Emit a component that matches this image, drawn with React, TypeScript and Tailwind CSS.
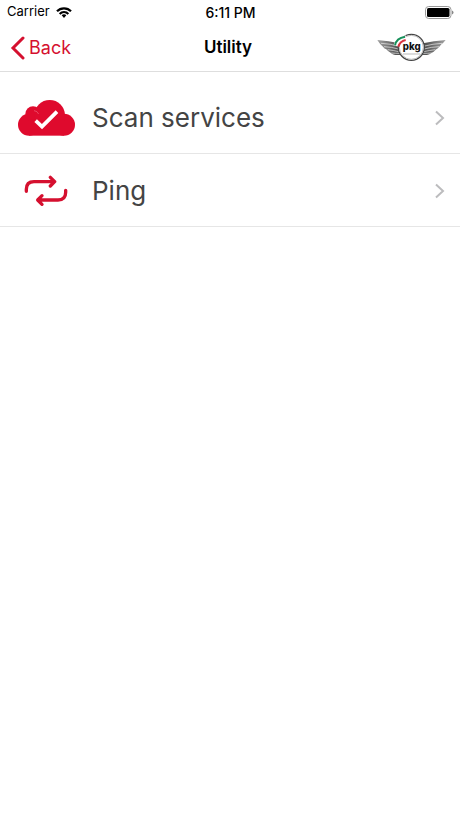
import React from "react";

function WifiIcon() {
  return (
    <svg viewBox="0 0 48 33" className="h-[11px] w-4" aria-hidden="true">
      <g fill="none" stroke="#000" strokeWidth="6.5">
        <path d="M3 13 C14 1 34 1 45 13" />
        <path d="M11 21 C18 13 30 13 37 21" />
      </g>
      <path d="M17 25 C21 21 27 21 31 25 L24 33 Z" />
    </svg>
  );
}

function BatteryIcon() {
  return (
    <svg viewBox="0 0 29 13" className="h-[13px] w-[29px]" aria-hidden="true">
      <rect x="0.5" y="0.5" width="25.5" height="12" rx="3.2" fill="#fff" stroke="#999" />
      <rect x="2" y="2" width="22.5" height="9" rx="1.6" />
      <path d="M27 4.5 Q28.5 5 28.5 6.5 T27 8.5 Z" fill="#888" />
    </svg>
  );
}

function Logo() {
  return (
    <svg viewBox="0 0 207 87" className="h-[29px] w-[69px]" role="img" aria-label="pkg">
      <defs>
        <linearGradient id="wing" x1="0" x2="1" y1="0" y2="0">
          <stop offset="0" stopColor="#a2a2a2" />
          <stop offset="0.28" stopColor="#555" />
          <stop offset="0.72" stopColor="#555" />
          <stop offset="1" stopColor="#a2a2a2" />
        </linearGradient>
      </defs>
      <path
        d="M1 21 Q35 23 68 31 L138 31 Q170 23 206 21 Q199 30 194 33 L187 41 Q181 48 178 49 Q170 58 164 59 Q156 68 136 66 L68 66 Q48 68 41 59 Q34 57 28 49 Q22 48 18 41 Q12 38 1 21 Z"
        fill="url(#wing)"
      />
      <g fill="none" stroke="#f0f0f0" strokeWidth="2">
        <path d="M12 31 Q40 32 66 40 M21 41 Q45 42 64 48 M32 50 Q49 52 65 56 M43 60 Q55 61 68 61" />
        <path d="M195 31 Q169 32 139 40 M186 41 Q162 42 141 48 M175 50 Q158 52 140 56 M164 60 Q152 61 138 61" />
      </g>
      <circle cx="103" cy="43" r="39" fill="#fff" stroke="#444" strokeWidth="4" />
      <circle cx="103" cy="43" r="36" fill="none" stroke="#bbb" strokeWidth="3" />
      <g fill="none">
        <path d="M57 38 Q62 15 86 14" stroke="#fff" strokeWidth="15" />
        <path d="M54 37 Q58 15 84 11" stroke="#16905a" strokeWidth="6" />
        <path d="M64 41 Q69 25 86 21" stroke="#d9343f" strokeWidth="6" />
      </g>
      <text
        x="104"
        y="50"
        textAnchor="middle"
        fontSize="29"
        fontWeight="800"
        fill="#111"
        className="font-['Inter',sans-serif]"
      >
        pkg
      </text>
      <path d="M78 63 H129" stroke="#aaa" strokeWidth="2.5" />
    </svg>
  );
}

function CloudCheckIcon() {
  return (
    <svg viewBox="0 0 171 108" className="h-9 w-[57px]" aria-hidden="true">
      <g fill="#df0a2d">
        <circle cx="33" cy="74" r="33" />
        <circle cx="138" cy="74" r="33" />
        <circle cx="45" cy="42" r="23" />
        <circle cx="95" cy="46" r="46" />
        <rect x="33" y="58" width="105" height="49" />
      </g>
      <path d="M48 32 Q57 32 62 42" fill="none" stroke="#fff" strokeOpacity="0.25" strokeWidth="3" />
      <path d="M53 62 L72 80 L117 35" fill="none" stroke="#fff" strokeWidth="11" />
    </svg>
  );
}

function RepeatIcon() {
  return (
    <svg
      viewBox="0 0 132 96"
      className="h-8 w-11"
      fill="none"
      stroke="#d5102f"
      strokeWidth="10"
      strokeLinecap="round"
      strokeLinejoin="round"
      aria-hidden="true"
    >
      <path d="M7 49 V43 Q7 20 30 20 H91 M79 7 L92 20 L79 33" />
      <path d="M125 46 V52 Q125 75 102 75 H42 M54 62 L41 75 L54 88" />
    </svg>
  );
}

function Disclosure() {
  return (
    <svg
      viewBox="0 0 10 16"
      className="h-4 w-[10px]"
      fill="none"
      stroke="#bcbcbe"
      strokeWidth="2"
      aria-hidden="true"
    >
      <path d="M1 1.5 L8 8 L1 14.5" />
    </svg>
  );
}

const items = [
  { label: "Scan services", icon: <CloudCheckIcon /> },
  { label: "Ping", icon: <RepeatIcon /> },
];

export default function App() {
  return (
    <div className="min-h-screen bg-white font-['Inter','Liberation_Sans',sans-serif] text-black">
      <header className="border-b border-[#dedede]">
        <div className="grid h-6 grid-cols-3 items-center pr-[6px] pl-[7px] text-[13px]">
          <div className="flex items-center gap-[6px]">
            <span>Carrier</span>
            <WifiIcon />
          </div>
          <time className="text-center text-[14px] font-medium">6:11 PM</time>
          <div className="flex justify-end">
            <BatteryIcon />
          </div>
        </div>
        <nav className="grid h-[47px] grid-cols-3 items-center pr-[14px] pl-[10px]">
          <button type="button" className="flex items-center gap-1 text-[18px] text-[#d5102f]">
            <svg
              viewBox="0 0 15 24"
              className="h-6 w-[15px]"
              fill="none"
              stroke="currentColor"
              strokeWidth="3"
              strokeLinecap="round"
              aria-hidden="true"
            >
              <path d="M13 2 L3 12 L13 22" />
            </svg>
            Back
          </button>
          <h1 className="text-center text-[17px] font-semibold">Utility</h1>
          <div className="flex justify-end">
            <Logo />
          </div>
        </nav>
      </header>
      <ul className="pt-[9px]">
        {items.map((item) => (
          <li key={item.label} className="border-b border-[#e6e6e6]">
            <button
              type="button"
              className="flex h-[72px] w-full items-center pt-px pr-[15px] text-left"
            >
              <span className="flex w-[92px] justify-center">{item.icon}</span>
              <span className="flex-1 text-[26px] text-[#444]">{item.label}</span>
              <Disclosure />
            </button>
          </li>
        ))}
      </ul>
    </div>
  );
}
